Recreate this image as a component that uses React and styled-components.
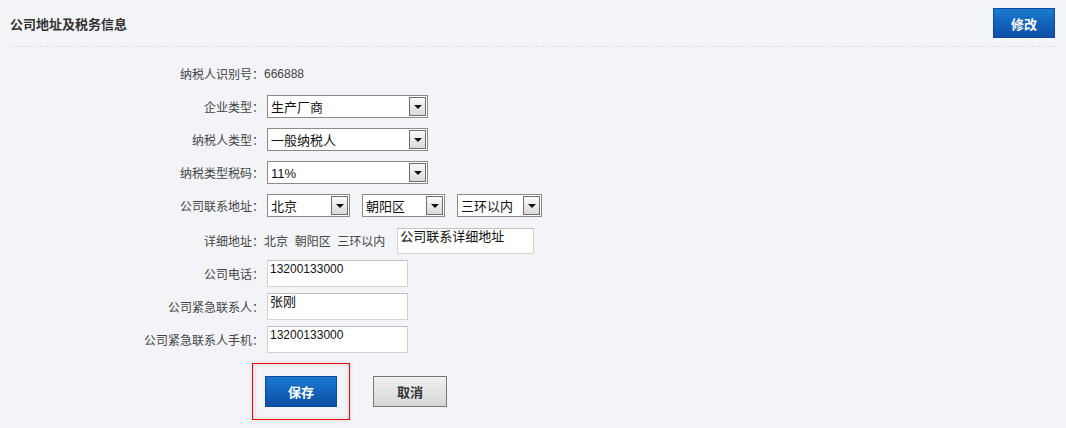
import styled, { createGlobalStyle } from "styled-components";

const GlobalStyle = createGlobalStyle`
  html, body {
    margin: 0;
    padding: 0;
    background: #f3f4f8;
  }
  body {
    font-family: "Liberation Sans", "Noto Sans CJK SC", sans-serif;
    font-size: 12px;
    color: #333;
  }
`;

const Page = styled.div`
  width: 1066px;
  height: 428px;
  background: #f3f4f8;
`;

const Header = styled.div`
  display: flex;
  justify-content: space-between;
  align-items: center;
  margin: 0 11px 0 10px;
  height: 47px;
  border-bottom: 1px dashed #dcdcdc;
  box-sizing: border-box;
`;

const Title = styled.h2`
  margin: 0;
  font-size: 13px;
  font-weight: bold;
  color: #333;
`;

const BlueButton = styled.button`
  width: ${(p) => p.w || 62}px;
  height: ${(p) => p.h || 30}px;
  border: 1px solid #0d4a9a;
  background: linear-gradient(#1b7ad0, #0c4ea6);
  color: #fff;
  font-family: inherit;
  font-size: 13px;
  font-weight: bold;
  padding: 0;
  cursor: pointer;
`;

const GrayButton = styled.button`
  width: 74px;
  height: 31px;
  border: 1px solid #777;
  background: linear-gradient(#f0f0f0, #d6d6d6);
  color: #333;
  font-family: inherit;
  font-size: 13px;
  font-weight: bold;
  padding: 0;
  cursor: pointer;
`;

const Form = styled.div`
  padding-top: 10px;
  display: flex;
  flex-direction: column;
`;

const Row = styled.div`
  display: flex;
  align-items: center;
  height: 33px;
  margin-top: ${(p) => p.mt || 0}px;
`;

const Label = styled.div`
  width: 264px;
  text-align: right;
  color: #444;
  flex-shrink: 0;
`;

const Value = styled.div`
  display: flex;
  align-items: center;
  gap: ${(p) => p.gap || 0}px;
  color: #444;
`;

const SelectBox = styled.div`
  position: relative;
  width: ${(p) => p.w}px;
  height: 23px;
  box-sizing: border-box;
  border: 1px solid #8a8a8a;
  background: #fff;
  margin-left: ${(p) => p.ml || 0}px;
  display: flex;
  align-items: flex-end;
  padding: 0 0 0 3px;
  font-size: 13px;
  color: #111;
  line-height: 18px;
`;

const ArrowBtn = styled.span`
  position: absolute;
  right: 1px;
  top: 1px;
  width: 17px;
  height: 19px;
  box-sizing: border-box;
  border: 1px solid #6e6e6e;
  background: linear-gradient(#fafafa, #d9d9d9);
  display: flex;
  align-items: center;
  justify-content: center;
`;

const Arrow = styled.span`
  width: 0;
  height: 0;
  border-left: 4px solid transparent;
  border-right: 4px solid transparent;
  border-top: 4px solid #111;
`;

const TextBox = styled.div`
  width: ${(p) => p.w}px;
  height: ${(p) => p.h}px;
  box-sizing: border-box;
  border: 1px solid #d2d2d2;
  border-top-color: #c0c0c0;
  background: #fff;
  padding: 1px 2px;
  font-size: ${(p) => p.fs || 12}px;
  color: #111;
  line-height: 14px;
  margin-left: ${(p) => p.ml || 0}px;
`;

const Actions = styled.div`
  display: flex;
  align-items: center;
  gap: 23px;
  padding-left: 252px;
  margin-top: 7px;
`;

const Highlight = styled.div`
  width: 98px;
  height: 57px;
  box-sizing: border-box;
  border: 1px solid #f00;
  display: flex;
  align-items: center;
  padding-left: 12px;
  box-shadow: 0 0 4px rgba(0, 0, 0, 0.12), inset 0 0 5px rgba(0, 0, 0, 0.12);
`;

const Select = ({ w, ml, children }) => (
  <SelectBox w={w} ml={ml}>
    {children}
    <ArrowBtn>
      <Arrow />
    </ArrowBtn>
  </SelectBox>
);

const App = () => (
  <Page>
    <GlobalStyle />
    <Header>
      <Title>公司地址及税务信息</Title>
      <BlueButton>修改</BlueButton>
    </Header>
    <Form>
      <Row>
        <Label>纳税人识别号：</Label>
        <Value>666888</Value>
      </Row>
      <Row>
        <Label>企业类型：</Label>
        <Select w={161} ml={3}>生产厂商</Select>
      </Row>
      <Row>
        <Label>纳税人类型：</Label>
        <Select w={161} ml={3}>一般纳税人</Select>
      </Row>
      <Row>
        <Label>纳税类型税码：</Label>
        <Select w={161} ml={3}>11%</Select>
      </Row>
      <Row>
        <Label>公司联系地址：</Label>
        <Value gap={12}>
          <Select w={83} ml={3}>北京</Select>
          <Select w={83}>朝阳区</Select>
          <Select w={85}>三环以内</Select>
        </Value>
      </Row>
      <Row mt={2}>
        <Label>详细地址：</Label>
        <Value>
          北京&nbsp;&nbsp;朝阳区&nbsp;&nbsp;三环以内
          <TextBox w={137} h={26} fs={13} ml={12}>
            公司联系详细地址
          </TextBox>
        </Value>
      </Row>
      <Row>
        <Label>公司电话：</Label>
        <TextBox w={141} h={27} ml={3}>
          13200133000
        </TextBox>
      </Row>
      <Row>
        <Label>公司紧急联系人：</Label>
        <TextBox w={141} h={27} fs={13} ml={3}>
          张刚
        </TextBox>
      </Row>
      <Row>
        <Label>公司紧急联系人手机：</Label>
        <TextBox w={141} h={27} ml={3}>
          13200133000
        </TextBox>
      </Row>
      <Actions>
        <Highlight>
          <BlueButton w={72} h={31}>
            保存
          </BlueButton>
        </Highlight>
        <GrayButton>取消</GrayButton>
      </Actions>
    </Form>
  </Page>
);

export default App;
